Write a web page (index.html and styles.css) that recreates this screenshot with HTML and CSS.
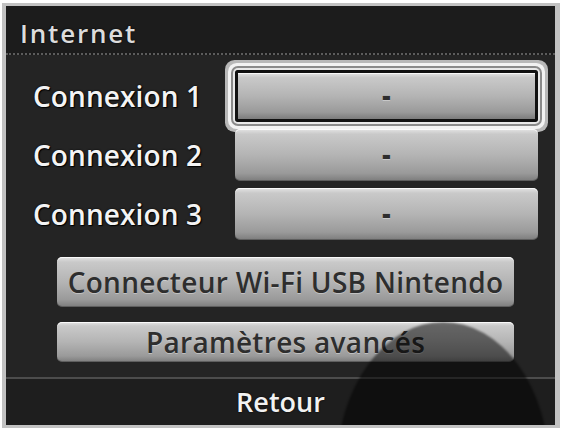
FILE: index.html
```html
<!DOCTYPE html>
<html lang="fr">
<head>
<meta charset="utf-8">
<title>Internet</title>
<link rel="stylesheet" href="styles.css">
</head>
<body>
<div class="screen">
  <div class="header">Internet</div>
  <div class="conn-list">
    <div class="label">Connexion 1</div>
    <div class="btn btn-conn is-selected">-</div>
    <div class="label">Connexion 2</div>
    <div class="btn btn-conn">-</div>
    <div class="label">Connexion 3</div>
    <div class="btn btn-conn">-</div>
  </div>
  <div class="wide-list">
    <div class="btn btn-wide btn-tall">Connecteur Wi-Fi USB Nintendo</div>
    <div class="btn btn-wide btn-short">Paramètres avancés</div>
  </div>
  <div class="footer">Retour</div>
  <div class="shadow"></div>
</div>
</body>
</html>
```
FILE: styles.css
```css
html, body {
  margin: 0;
  padding: 0;
  background: #ffffff;
}

body {
  font-family: "Open Sans", "DejaVu Sans", sans-serif;
}

.screen {
  position: relative;
  margin: 3px 0 0 2px;
  width: 558px;
  height: 425px;
  box-sizing: border-box;
  border-style: solid;
  border-color: #c2c2c2;
  border-width: 3px 5px 3px 4px;
  background: #242424;
  overflow: hidden;
  display: flex;
  flex-direction: column;
}

.header {
  height: 49px;
  box-sizing: border-box;
  padding: 8px 0 0 14px;
  line-height: 38px;
  font-size: 26px;
  font-weight: 600;
  letter-spacing: 1.8px;
  color: #dcdcdc;
  background: #1c1c1c;
  border-bottom: 2px dotted #5c5c5c;
  text-shadow: 0 0 2px #000;
}

.conn-list {
  display: grid;
  grid-template-columns: 202px 303px;
  grid-auto-rows: 52px;
  row-gap: 7px;
  padding: 15px 0 0 27px;
}

.label {
  display: flex;
  align-items: center;
  font-size: 28px;
  font-weight: 600;
  letter-spacing: 0.1px;
  color: #f4f4f4;
  text-shadow: 0 0 2px #000, 1px 1px 1px #000;
}

.btn {
  box-sizing: border-box;
  display: flex;
  align-items: center;
  justify-content: center;
  border-radius: 5px;
  color: #2e2e2e;
  background: linear-gradient(to bottom, #e4e4e4 0%, #c9c9c9 10%, #b4b4b4 50%, #9a9a9a 85%, #7c7c7c 100%);
  box-shadow: inset 0 1px 0 rgba(255,255,255,0.8), inset 0 -1px 0 rgba(0,0,0,0.25);
  text-shadow: 0 1px 0 rgba(255,255,255,0.35);
}

.btn-conn {
  font-size: 26px;
  font-weight: 800;
  padding-bottom: 2px;
}

.btn-conn.is-selected {
  border: 3px solid #111;
  border-radius: 3px;
  box-shadow: inset 0 1px 0 rgba(255,255,255,0.8),
    0 0 0 2px #e8e8e8,
    0 0 0 4px #8a8a8a,
    0 0 0 7px #f2f2f2,
    0 0 0 10px #b8b8b8;
}

.wide-list {
  display: flex;
  flex-direction: column;
  gap: 15px;
  padding: 17px 0 0 51px;
  width: 457px;
}

.btn-wide {
  font-size: 28px;
  font-weight: 600;
  letter-spacing: 0.3px;
}

.btn-tall {
  height: 50px;
}

.btn-short {
  height: 40px;
}

.footer {
  margin-top: auto;
  height: 48px;
  box-sizing: border-box;
  border-top: 2px solid #4c4c4c;
  background: #1e1e1e;
  line-height: 46px;
  text-align: center;
  font-size: 27px;
  font-weight: 600;
  color: #f2f2f2;
  text-shadow: 0 0 2px #000;
}

.shadow {
  position: absolute;
  left: 331px;
  top: 316px;
  width: 212px;
  height: 290px;
  border-radius: 50%;
  background: rgba(0, 0, 0, 0.5);
  filter: blur(1px);
  pointer-events: none;
}
```
